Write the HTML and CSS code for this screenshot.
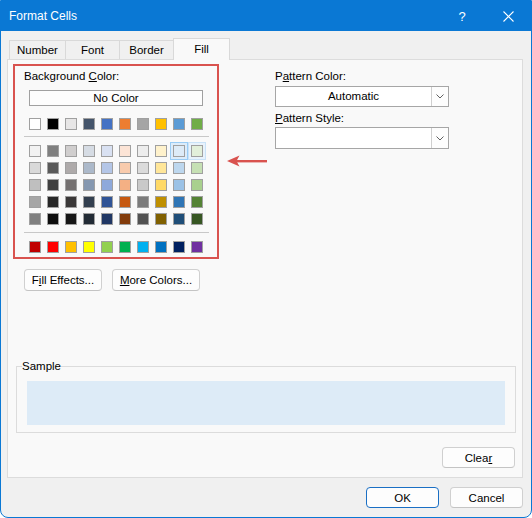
FILE: index.html
```html
<!DOCTYPE html>
<html>
<head>
<meta charset="utf-8">
<title>Format Cells</title>
<link rel="stylesheet" href="styles.css">
</head>
<body>
<div class="window">
  <div class="titlebar">
    <span class="title">Format Cells</span>
    <span class="cap-btn help">?</span>
    <span class="cap-btn close">
      <svg width="11" height="11" viewBox="0 0 11 11"><path d="M0.5 0.5 L10.5 10.5 M10.5 0.5 L0.5 10.5" stroke="#fff" stroke-width="1.1" fill="none"/></svg>
    </span>
  </div>
  <div class="content">
    <div class="tabs">
      <div class="tab tab-number">Number</div>
      <div class="tab tab-font">Font</div>
      <div class="tab tab-border">Border</div>
      <div class="tab tab-fill active">Fill</div>
    </div>
    <div class="panel">
      <div class="top">
        <div class="bgcolor">
          <div class="label bg-label">Background <u>C</u>olor:</div>
          <div class="nocolor">No Color</div>
          <div class="swrow first-row">
            <span class="sw" style="background:#FFFFFF"></span>
            <span class="sw" style="background:#000000"></span>
            <span class="sw" style="background:#E7E6E6"></span>
            <span class="sw" style="background:#44546A"></span>
            <span class="sw" style="background:#4472C4"></span>
            <span class="sw" style="background:#ED7D31"></span>
            <span class="sw" style="background:#A5A5A5"></span>
            <span class="sw" style="background:#FFC000"></span>
            <span class="sw" style="background:#5B9BD5"></span>
            <span class="sw" style="background:#70AD47"></span>
          </div>
          <div class="sep"></div>
          <div class="theme">
            <div class="swrow">
              <span class="sw" style="background:#F2F2F2"></span>
              <span class="sw" style="background:#7F7F7F"></span>
              <span class="sw" style="background:#D0CECE"></span>
              <span class="sw" style="background:#D6DCE4"></span>
              <span class="sw" style="background:#D9E1F2"></span>
              <span class="sw" style="background:#FCE4D6"></span>
              <span class="sw" style="background:#EDEDED"></span>
              <span class="sw" style="background:#FFF2CC"></span>
              <span class="sw selected" style="background:#DDEBF7"></span>
              <span class="sw hover" style="background:#E2EFDA"></span>
            </div>
            <div class="swrow">
              <span class="sw" style="background:#D9D9D9"></span>
              <span class="sw" style="background:#595959"></span>
              <span class="sw" style="background:#AEAAAA"></span>
              <span class="sw" style="background:#ACB9CA"></span>
              <span class="sw" style="background:#B4C6E7"></span>
              <span class="sw" style="background:#F8CBAD"></span>
              <span class="sw" style="background:#DBDBDB"></span>
              <span class="sw" style="background:#FFE699"></span>
              <span class="sw" style="background:#BDD7EE"></span>
              <span class="sw" style="background:#C6E0B4"></span>
            </div>
            <div class="swrow">
              <span class="sw" style="background:#BFBFBF"></span>
              <span class="sw" style="background:#404040"></span>
              <span class="sw" style="background:#757171"></span>
              <span class="sw" style="background:#8497B0"></span>
              <span class="sw" style="background:#8EA9DB"></span>
              <span class="sw" style="background:#F4B084"></span>
              <span class="sw" style="background:#C9C9C9"></span>
              <span class="sw" style="background:#FFD966"></span>
              <span class="sw" style="background:#9BC2E6"></span>
              <span class="sw" style="background:#A9D08E"></span>
            </div>
            <div class="swrow">
              <span class="sw" style="background:#A6A6A6"></span>
              <span class="sw" style="background:#262626"></span>
              <span class="sw" style="background:#3A3838"></span>
              <span class="sw" style="background:#333F4F"></span>
              <span class="sw" style="background:#305496"></span>
              <span class="sw" style="background:#C65911"></span>
              <span class="sw" style="background:#7B7B7B"></span>
              <span class="sw" style="background:#BF8F00"></span>
              <span class="sw" style="background:#2F75B5"></span>
              <span class="sw" style="background:#548235"></span>
            </div>
            <div class="swrow">
              <span class="sw" style="background:#808080"></span>
              <span class="sw" style="background:#0D0D0D"></span>
              <span class="sw" style="background:#161616"></span>
              <span class="sw" style="background:#222B35"></span>
              <span class="sw" style="background:#203764"></span>
              <span class="sw" style="background:#833C0C"></span>
              <span class="sw" style="background:#525252"></span>
              <span class="sw" style="background:#806000"></span>
              <span class="sw" style="background:#1F4E78"></span>
              <span class="sw" style="background:#375623"></span>
            </div>
          </div>
          <div class="sep sep2"></div>
          <div class="swrow std-row">
            <span class="sw" style="background:#C00000"></span>
            <span class="sw" style="background:#FF0000"></span>
            <span class="sw" style="background:#FFC000"></span>
            <span class="sw" style="background:#FFFF00"></span>
            <span class="sw" style="background:#92D050"></span>
            <span class="sw" style="background:#00B050"></span>
            <span class="sw" style="background:#00B0F0"></span>
            <span class="sw" style="background:#0070C0"></span>
            <span class="sw" style="background:#002060"></span>
            <span class="sw" style="background:#7030A0"></span>
          </div>
        </div>
        <div class="pattern">
          <div class="label pc-label">P<u>a</u>ttern Color:</div>
          <div class="combo combo1">
            <div class="combo-text">Automatic</div>
            <div class="combo-btn"><svg width="8" height="5" viewBox="0 0 8 5"><polyline points="0.5,0.5 4,4 7.5,0.5" fill="none" stroke="#606060" stroke-width="1"/></svg></div>
          </div>
          <div class="label ps-label"><u>P</u>attern Style:</div>
          <div class="combo combo2">
            <div class="combo-text"></div>
            <div class="combo-btn"><svg width="8" height="5" viewBox="0 0 8 5"><polyline points="0.5,0.5 4,4 7.5,0.5" fill="none" stroke="#606060" stroke-width="1"/></svg></div>
          </div>
        </div>
      </div>
      <div class="effects">
        <button class="btn btn-fill">F<u>i</u>ll Effects...</button>
        <button class="btn btn-more"><u>M</u>ore Colors...</button>
      </div>
      <fieldset class="sample">
        <legend>Sample</legend>
        <div class="sample-fill"></div>
      </fieldset>
      <div class="clear-row">
        <button class="btn btn-clear">Clea<u>r</u></button>
      </div>
      <svg class="arrow" width="52" height="20" viewBox="0 0 52 20">
        <path d="M1 9 L13.5 3.5 L10.5 9 L13.5 14.5 Z" fill="#d9534f"/>
        <rect x="9" y="8" width="32" height="2.4" fill="#d9534f"/>
      </svg>
    </div>
    <div class="footer">
      <button class="btn btn-ok">OK</button>
      <button class="btn btn-cancel">Cancel</button>
    </div>
  </div>
</div>
</body>
</html>
```

FILE: styles.css
```css
html, body {
  margin: 0;
  padding: 0;
  background: #ffffff;
}

body {
  font-family: "Liberation Sans", Arial, sans-serif;
  font-size: 11.5px;
  color: #000;
}

.window {
  width: 532px;
  height: 518px;
  box-sizing: border-box;
  border: 1px solid #0a78d4;
  border-radius: 0 0 8px 8px;
  background: #f0f0f0;
  overflow: hidden;
  display: flex;
  flex-direction: column;
}

.titlebar {
  height: 30px;
  flex: none;
  background: #0a78d4;
  color: #fff;
  display: flex;
  align-items: center;
  padding-left: 8px;
  font-size: 12px;
}

.title {
  flex: 1;
}

.cap-btn {
  width: 46px;
  height: 30px;
  display: flex;
  align-items: center;
  justify-content: center;
}

.help {
  font-size: 13px;
}

.close svg {
  display: block;
}

.content {
  padding: 7px 8px 0 6px;
}

.tabs {
  display: flex;
  align-items: flex-end;
  height: 21px;
  margin-left: 2px;
}

.tab {
  box-sizing: border-box;
  height: 19px;
  border: 1px solid #d9d9d9;
  border-bottom: none;
  margin-left: -1px;
  text-align: center;
  line-height: 18px;
  background: #f0f0f0;
}

.tab-number { margin-left: 0; width: 57px; }
.tab-font { width: 55px; }
.tab-border { width: 55px; }
.tab-fill { width: 57px; }

.tab.active {
  height: 22px;
  margin-bottom: -1px;
  padding-top: 1px;
  line-height: 18px;
  background: #f9f9f9;
  position: relative;
  z-index: 1;
}

.panel {
  position: relative;
  height: 419px;
  box-sizing: border-box;
  border: 1px solid #dcdcdc;
  background: #f9f9f9;
}

.top {
  display: flex;
  padding-top: 4px;
  margin-left: 5px;
}

.bgcolor {
  width: 206px;
  height: 195px;
  box-sizing: border-box;
  border: 2px solid #d9534f;
}

.label {
  height: 16px;
  line-height: 16px;
  white-space: nowrap;
}

.bg-label {
  margin: 2px 0 0 9px;
}

.nocolor {
  box-sizing: border-box;
  margin: 6px 0 0 14px;
  width: 174px;
  height: 16px;
  border: 1px solid #a0a0a0;
  background: #fdfdfd;
  text-align: center;
  line-height: 14px;
}

.swrow {
  display: flex;
  gap: 6px;
  margin-left: 14px;
}

.first-row {
  margin-top: 12px;
}

.sw {
  display: block;
  width: 12px;
  height: 12px;
  box-sizing: border-box;
  border: 1px solid #a0a0a0;
}

.sw.selected {
  box-shadow: 0 0 0 2px #dcecfa, 0 0 0 3px #99ccf5;
}

.sw.hover {
  box-shadow: 0 0 0 2px #e8f2fb, 0 0 0 3px #c9e2f7;
}

.sep {
  margin: 6px 0 0 9px;
  width: 185px;
  height: 1px;
  background: #c8c8c8;
}

.theme {
  margin-top: 8px;
  display: flex;
  flex-direction: column;
  gap: 5px;
}

.sep2 {
  margin-top: 7px;
}

.std-row {
  margin-top: 8px;
}

.pattern {
  margin-left: 56px;
  width: 174px;
}

.pc-label {
  margin-top: 4px;
}

.combo {
  box-sizing: border-box;
  display: flex;
  border: 1px solid #a6a6a6;
  background: #fff;
}

.combo1 {
  margin-top: 2px;
  height: 21px;
}

.ps-label {
  margin-top: 3px;
}

.combo2 {
  margin-top: 1px;
  height: 22px;
}

.combo-text {
  flex: 1;
  text-align: center;
  line-height: 19px;
}

.combo-btn {
  width: 16px;
  border-left: 1px solid #cfcfcf;
  display: flex;
  align-items: center;
  justify-content: center;
  background: #fdfdfd;
}

.combo-btn svg {
  display: block;
}

.btn {
  box-sizing: border-box;
  border: 1px solid #d0d0d0;
  border-bottom-color: #c4c4c4;
  border-radius: 4px;
  background: #fdfdfd;
  font-family: "Liberation Sans", Arial, sans-serif;
  font-size: 11.5px;
  color: #000;
  padding: 0;
  margin: 0;
  display: flex;
  align-items: center;
  justify-content: center;
}

.effects {
  display: flex;
  gap: 10px;
  margin: 10px 0 0 16px;
}

.btn-fill {
  width: 78px;
  height: 22px;
}

.btn-more {
  width: 88px;
  height: 22px;
}

.sample {
  margin: 67px 6px 0 8px;
  padding: 7px 10px 7px 10px;
  border: 1px solid #dcdcdc;
  min-width: 0;
}

.sample legend {
  padding: 0;
  margin-left: -5px;
  line-height: 16px;
  font-size: 11.5px;
}

.sample-fill {
  height: 44px;
  background: #ddebf7;
}

.clear-row {
  display: flex;
  justify-content: flex-end;
  margin: 14px 7px 0 0;
}

.btn-clear {
  width: 73px;
  height: 21px;
}

.arrow {
  position: absolute;
  left: 218px;
  top: 92px;
}

.footer {
  display: flex;
  justify-content: flex-end;
  gap: 11px;
  margin-top: 9px;
}

.btn-ok,
.btn-cancel {
  width: 73px;
  height: 21px;
}

.btn-ok {
  border-color: #1a6fc4;
}
```
